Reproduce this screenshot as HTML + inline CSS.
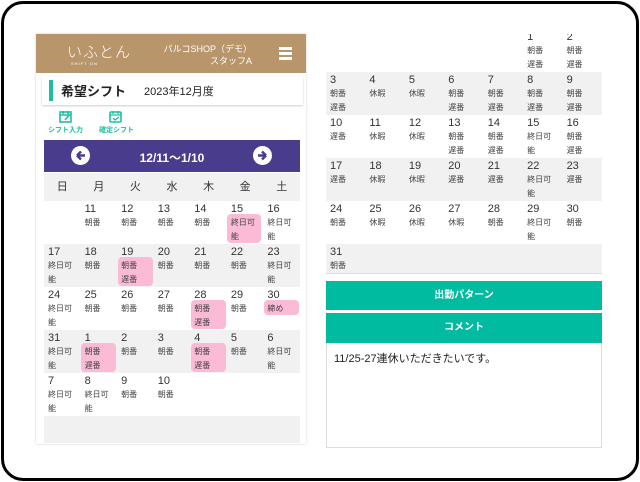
<!DOCTYPE html>
<html><head><meta charset="utf-8"><style>
*{margin:0;padding:0;box-sizing:border-box}
body{width:640px;height:482px;background:#fff;position:relative;overflow:hidden;font-family:"Liberation Sans","Noto Sans CJK JP",sans-serif;color:#333}
.frame{position:absolute;left:1px;top:1px;width:638px;height:480px;border:3px solid #000;border-radius:22px}
.a{position:absolute}
.cal{position:absolute;display:grid}
.cell{position:relative;font-size:10px;line-height:14px;padding:2px 0 0 4px}
.cell b{display:block;font-weight:normal;font-size:11px;line-height:13px;color:#333}
.cell span{display:block;font-size:8px;line-height:14px;color:#444}
.pk{position:absolute;background:#fbbad6;border-radius:4px}
.g{background:#f1f1f1}
</style></head><body>
<div class="frame"></div>

<!-- left panel -->
<div class="a" style="left:36px;top:34px;width:270px;height:410px;background:#fff;box-shadow:0 0 2px #ccc"></div>
<div class="a" style="left:36px;top:34px;width:270px;height:39px;background:#b8956a"></div>
<div class="a" style="left:67px;top:41px;color:#fff;font-size:15px;letter-spacing:1px;font-weight:300">いふとん</div>
<div class="a" style="left:71px;top:61px;color:#fff;font-size:4px;letter-spacing:1px">SHIFT·ON</div>
<div class="a" style="left:140px;top:43px;color:#fff;font-size:9px;line-height:12px;text-align:right;width:112px;white-space:nowrap">パルコSHOP（デモ）<br>スタッフA</div>
<div class="a" style="left:279px;top:47px;width:13px;height:3px;background:#fff;box-shadow:0 5px 0 #fff,0 10px 0 #fff"></div>
<div class="a" style="left:42px;top:77px;width:261px;height:28px;background:#fff;box-shadow:0 1px 2px #ccc"></div>
<div class="a" style="left:49px;top:80px;width:4px;height:21px;background:#1ebfa0"></div>
<div class="a" style="left:61px;top:81px;font-size:13px;font-weight:bold;color:#222">希望シフト</div>
<div class="a" style="left:144px;top:83px;font-size:11px;color:#222">2023年12月度</div>
<svg class="a" style="left:59px;top:110px" width="14" height="13"><rect x="1" y="2" width="11" height="10" fill="none" stroke="#1ebfa0" stroke-width="1.6"/><path d="M1 5h11M4 1v3M9 1v3M6 10l5-6" stroke="#1ebfa0" stroke-width="1.6"/></svg>
<svg class="a" style="left:109px;top:110px" width="14" height="13"><rect x="1" y="2" width="11" height="10" rx="1" fill="none" stroke="#1ebfa0" stroke-width="1.6"/><path d="M1 5h11M4 1v3M9 1v3M4 8l2 2 4-3" stroke="#1ebfa0" stroke-width="1.3" fill="none"/></svg>
<div class="a" style="left:48px;top:125px;font-size:7px;color:#1ebfa0;font-weight:bold">シフト入力</div>
<div class="a" style="left:99px;top:125px;font-size:7px;color:#1ebfa0;font-weight:bold">確定シフト</div>
<div class="a" style="left:44px;top:140px;width:256px;height:32px;background:#4a3c8c"></div>
<div class="a" style="left:71px;top:146px;width:19px;height:19px;border-radius:50%;background:#fff"></div>
<svg class="a" style="left:74px;top:149px" width="13" height="13"><path d="M3 6.5h8M3 6.5l4-4M3 6.5l4 4" stroke="#4a3c8c" stroke-width="2.4" fill="none"/></svg>
<div class="a" style="left:253px;top:146px;width:19px;height:19px;border-radius:50%;background:#fff"></div>
<svg class="a" style="left:256px;top:149px" width="13" height="13"><path d="M2 6.5h8M10 6.5l-4-4M10 6.5l-4 4" stroke="#4a3c8c" stroke-width="2.4" fill="none"/></svg>
<div class="a" style="left:44px;top:149px;width:256px;text-align:center;color:#fff;font-size:12px;font-weight:bold">12/11〜1/10</div>
<div class="a" style="left:44px;top:173px;width:256px;height:28px;background:#f1f1f1;display:grid;grid-template-columns:repeat(7,1fr);font-size:11px;color:#333;text-align:center;line-height:28px">
<div>日</div><div>月</div><div>火</div><div>水</div><div>木</div><div>金</div><div>土</div></div>
<div class="a g" style="left:44px;top:201px;width:256px;height:242px"></div>
<div class="a" style="left:44px;top:201px;width:256px;height:43px;background:#fff"></div>
<div class="a" style="left:44px;top:287px;width:256px;height:43px;background:#fff"></div>
<div class="a" style="left:44px;top:373px;width:256px;height:43px;background:#fff"></div>
<!-- pinks left -->
<div class="pk" style="left:227px;top:214px;width:34px;height:29px"></div>
<div class="pk" style="left:118px;top:257px;width:35px;height:29px"></div>
<div class="pk" style="left:191px;top:300px;width:35px;height:29px"></div>
<div class="pk" style="left:264px;top:300px;width:35px;height:15px"></div>
<div class="pk" style="left:81px;top:343px;width:35px;height:29px"></div>
<div class="pk" style="left:191px;top:343px;width:35px;height:29px"></div>
<div class="cal" style="left:44px;top:201px;width:256px;grid-template-columns:repeat(7,1fr);grid-auto-rows:43px">
<div class="cell"></div>
<div class="cell"><b>11</b><span>朝番</span></div>
<div class="cell"><b>12</b><span>朝番</span></div>
<div class="cell"><b>13</b><span>朝番</span></div>
<div class="cell"><b>14</b><span>朝番</span></div>
<div class="cell"><b>15</b><span>終日可<br>能</span></div>
<div class="cell"><b>16</b><span>終日可<br>能</span></div>
<div class="cell"><b>17</b><span>終日可<br>能</span></div>
<div class="cell"><b>18</b><span>朝番</span></div>
<div class="cell"><b>19</b><span>朝番<br>遅番</span></div>
<div class="cell"><b>20</b><span>朝番</span></div>
<div class="cell"><b>21</b><span>朝番</span></div>
<div class="cell"><b>22</b><span>朝番</span></div>
<div class="cell"><b>23</b><span>終日可<br>能</span></div>
<div class="cell"><b>24</b><span>終日可<br>能</span></div>
<div class="cell"><b>25</b><span>朝番</span></div>
<div class="cell"><b>26</b><span>朝番</span></div>
<div class="cell"><b>27</b><span>朝番</span></div>
<div class="cell"><b>28</b><span>朝番<br>遅番</span></div>
<div class="cell"><b>29</b><span>朝番</span></div>
<div class="cell"><b>30</b><span>締め</span></div>
<div class="cell"><b>31</b><span>終日可<br>能</span></div>
<div class="cell"><b>1</b><span>朝番<br>遅番</span></div>
<div class="cell"><b>2</b><span>朝番</span></div>
<div class="cell"><b>3</b><span>朝番</span></div>
<div class="cell"><b>4</b><span>朝番<br>遅番</span></div>
<div class="cell"><b>5</b><span>朝番</span></div>
<div class="cell"><b>6</b><span>終日可<br>能</span></div>
<div class="cell"><b>7</b><span>終日可<br>能</span></div>
<div class="cell"><b>8</b><span>終日可<br>能</span></div>
<div class="cell"><b>9</b><span>朝番</span></div>
<div class="cell"><b>10</b><span>朝番</span></div>
<div class="cell"></div><div class="cell"></div><div class="cell"></div>
</div>

<!-- right panel -->
<div class="a" style="left:326px;top:34px;width:276px;height:240px;background:#fff;border-bottom:1px solid #ddd"></div>
<div class="cal" style="left:326px;top:29px;width:276px;grid-template-columns:repeat(7,1fr);grid-template-rows:43px 43px 43px 43px 43px 29px">
<div class="cell"></div><div class="cell"></div><div class="cell"></div><div class="cell"></div><div class="cell"></div>
<div class="cell"><b>1</b><span>朝番<br>遅番</span></div>
<div class="cell"><b>2</b><span>朝番<br>遅番</span></div>
<div class="cell g"><b>3</b><span>朝番<br>遅番</span></div>
<div class="cell g"><b>4</b><span>休暇</span></div>
<div class="cell g"><b>5</b><span>休暇</span></div>
<div class="cell g"><b>6</b><span>朝番<br>遅番</span></div>
<div class="cell g"><b>7</b><span>朝番<br>遅番</span></div>
<div class="cell g"><b>8</b><span>朝番<br>遅番</span></div>
<div class="cell g"><b>9</b><span>朝番<br>遅番</span></div>
<div class="cell"><b>10</b><span>遅番</span></div>
<div class="cell"><b>11</b><span>休暇</span></div>
<div class="cell"><b>12</b><span>休暇</span></div>
<div class="cell"><b>13</b><span>朝番<br>遅番</span></div>
<div class="cell"><b>14</b><span>朝番<br>遅番</span></div>
<div class="cell"><b>15</b><span>終日可<br>能</span></div>
<div class="cell"><b>16</b><span>朝番<br>遅番</span></div>
<div class="cell g"><b>17</b><span>遅番</span></div>
<div class="cell g"><b>18</b><span>休暇</span></div>
<div class="cell g"><b>19</b><span>休暇</span></div>
<div class="cell g"><b>20</b><span>遅番</span></div>
<div class="cell g"><b>21</b><span>遅番</span></div>
<div class="cell g"><b>22</b><span>終日可<br>能</span></div>
<div class="cell g"><b>23</b><span>遅番</span></div>
<div class="cell"><b>24</b><span>朝番</span></div>
<div class="cell"><b>25</b><span>休暇</span></div>
<div class="cell"><b>26</b><span>休暇</span></div>
<div class="cell"><b>27</b><span>休暇</span></div>
<div class="cell"><b>28</b><span>朝番</span></div>
<div class="cell"><b>29</b><span>終日可<br>能</span></div>
<div class="cell"><b>30</b><span>朝番</span></div>
<div class="cell g"><b>31</b><span>朝番</span></div>
<div class="cell g"></div><div class="cell g"></div><div class="cell g"></div><div class="cell g"></div><div class="cell g"></div><div class="cell g"></div>
</div>
<div class="a" style="left:326px;top:20px;width:276px;height:14px;background:#fff"></div>
<div class="a" style="left:326px;top:281px;width:276px;height:29px;background:#00bb9f;color:#fff;font-size:10px;font-weight:bold;text-align:center;line-height:29px">出勤パターン</div>
<div class="a" style="left:326px;top:313px;width:276px;height:30px;background:#00bb9f;color:#fff;font-size:10px;font-weight:bold;text-align:center;line-height:30px">コメント</div>
<div class="a" style="left:326px;top:343px;width:276px;height:105px;background:#fff;border:1px solid #ddd;border-top:none;padding:7px 7px;font-size:11px;color:#222">11/25-27連休いただきたいです。</div>
</body></html>
